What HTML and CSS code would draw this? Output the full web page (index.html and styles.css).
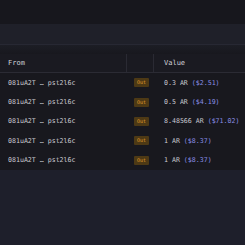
FILE: index.html
```html
<!DOCTYPE html>
<html>
<head>
<meta charset="utf-8">
<link rel="stylesheet" href="styles.css">
</head>
<body>
<div class="top"></div>
<div class="band"></div>
<div class="gap"></div>
<div class="table">
  <div class="row head">
    <div class="c-from">From</div>
    <div class="c-dir"></div>
    <div class="c-val">Value</div>
  </div>
  <div class="row">
    <div class="c-from">081uA2T … pst2l6c</div>
    <div class="c-dir"><span class="badge">Out</span></div>
    <div class="c-val">0.3 AR <span class="usd">($2.51)</span></div>
  </div>
  <div class="row">
    <div class="c-from">081uA2T … pst2l6c</div>
    <div class="c-dir"><span class="badge">Out</span></div>
    <div class="c-val">0.5 AR <span class="usd">($4.19)</span></div>
  </div>
  <div class="row">
    <div class="c-from">081uA2T … pst2l6c</div>
    <div class="c-dir"><span class="badge">Out</span></div>
    <div class="c-val">8.48566 AR <span class="usd">($71.02)</span></div>
  </div>
  <div class="row">
    <div class="c-from">081uA2T … pst2l6c</div>
    <div class="c-dir"><span class="badge">Out</span></div>
    <div class="c-val">1 AR <span class="usd">($8.37)</span></div>
  </div>
  <div class="row">
    <div class="c-from">081uA2T … pst2l6c</div>
    <div class="c-dir"><span class="badge">Out</span></div>
    <div class="c-val">1 AR <span class="usd">($8.37)</span></div>
  </div>
</div>
<div class="foot"></div>
</body>
</html>
```
FILE: styles.css
```css
html, body {
  margin: 0;
  padding: 0;
  background: #17171d;
  width: 245px;
  height: 245px;
  overflow: hidden;
  font-family: "DejaVu Sans Mono", "Liberation Mono", monospace;
  color: #c8c8d0;
}
.top {
  height: 24px;
  background: #17171d;
}
.band {
  height: 20px;
  background: #1f2029;
  border-bottom: 1px solid #272833;
}
.gap {
  height: 9px;
  background: linear-gradient(#1c1d25, #18181e);
}
.table {
  background: #18181e;
}
.row {
  display: grid;
  grid-template-columns: 126px 28px 1fr;
  height: 19.4px;
  align-items: center;
  font-size: 6.6px;
  white-space: nowrap;
}
.row.head {
  height: 18px;
  border-bottom: 1px solid #2b2b34;
  font-size: 7px;
  color: #d0d0d8;
  background: #1a1a21;
}
.head .c-dir {
  height: 100%;
  border-left: 1px solid #2a2a33;
  border-right: 1px solid #2a2a33;
  box-sizing: border-box;
}
.c-from {
  padding-left: 8px;
}
.c-dir {
  display: flex;
  justify-content: center;
  height: 100%;
  align-items: center;
  padding-left: 3px;
  box-sizing: border-box;
}
.c-val {
  padding-left: 10px;
}
.badge {
  display: inline-block;
  width: 15px;
  height: 9px;
  line-height: 9px;
  text-align: center;
  background: #4d3915;
  color: #e09e2a;
  font-size: 5px;
  border-radius: 1px;
}
.usd {
  color: #8a8ee6;
}
.foot {
  height: 80px;
  background: #1e1f2b;
}
```
